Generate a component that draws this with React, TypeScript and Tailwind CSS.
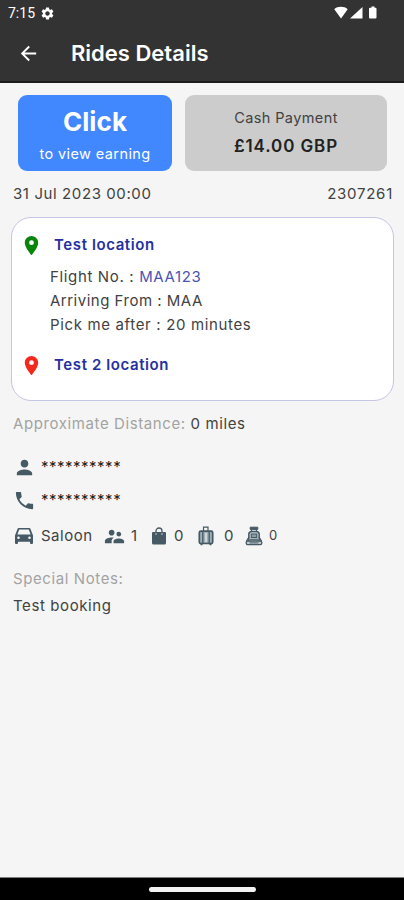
import { type ReactNode } from 'react'
import {
  MdArrowBack,
  MdLocationOn,
  MdPerson,
  MdPhone,
  MdSettings,
  MdSupervisorAccount
} from 'react-icons/md'

const ride = {
  date: '31 Jul 2023 00:00',
  reference: '2307261',
  price: '£14.00 GBP',
  pickup: 'Test location',
  dropoff: 'Test 2 location',
  flight: 'MAA123',
  arrivingFrom: 'MAA',
  pickAfter: '20 minutes',
  distance: '0 miles',
  vehicle: 'Saloon',
  notes: 'Test booking'
}

function StatusBar () {
  return (
    <div className="flex h-6 items-center justify-between pl-2 pr-[25px] pt-0.5 text-white">
      <div className="flex items-center gap-[5px]">
        <span className="font-[Roboto] text-[14px] leading-none tracking-[0px]">7:15</span>
        <MdSettings className="size-[15px]" />
      </div>
      <svg viewBox="0 0 46 14" className="h-[14px] w-[46px]" fill="currentColor">
        <path d="M1.300 3.200C4.500 0 11.200 0 14.700 3.200L8 12.500Z" />
        <path d="M29.500 1V12.500H17Z" />
        <path d="M37 1.800h1.500V.6h3v1.200H42.500q1 0 1 1V11.500q0 1-1 1H37q-1 0-1-1V2.800q0-1 1-1Z" />
      </svg>
    </div>
  )
}

function CarIcon () {
  return (
    <svg viewBox="0 0 20 18" className="h-[18px] w-5" fill="currentColor">
      <path
        fillRule="evenodd"
        d="M4.800 1h10.400q1 0 1.300 1L19 8.500V16q0 1-1 1h-1q-1 0-1-1v-1.200H4V16q0 1-1 1H2q-1 0-1-1V8.500L3.500 2q.3-1 1.300-1ZM5.200 2.600 3.400 7.600h13.200l-1.800-5ZM4.500 9.500a1.300 1.300 0 1 0 0 2.600 1.300 1.300 0 0 0 0-2.600ZM15.500 9.500a1.300 1.300 0 1 0 0 2.600 1.300 1.300 0 0 0 0-2.600Z"
      />
    </svg>
  )
}

function BagIcon () {
  return (
    <svg viewBox="0 0 16 18" className="h-[18px] w-4" fill="none">
      <path d="M2 5h12q1 0 1 1v10q0 1.500-1.500 1.500h-11Q1 17.500 1 16V6q0-1 1-1Z" fill="currentColor" />
      <path d="M5 5.500V4a3 3 0 0 1 6 0v1.500" stroke="currentColor" strokeWidth="1.300" />
      <path d="M5 6v2M11 6v2" stroke="#c3ccd1" strokeWidth="1" />
    </svg>
  )
}

function SuitcaseIcon () {
  return (
    <svg viewBox="0 0 16 20" className="h-5 w-4" fill="none" stroke="currentColor">
      <path d="M5.500 5V1.200h4.500V5" strokeWidth="1.200" />
      <rect x="1.300" y="5.200" width="13.400" height="12.300" rx="1.500" fill="#9fadb5" strokeWidth="1.700" />
      <path d="M4.800 5.500v12M11.200 5.500v12" strokeWidth="1.300" />
      <path d="M8 7v9" stroke="#dfe4e7" strokeWidth="1.500" />
      <path d="M3.500 17.500v1.800M12.500 17.500v1.800" strokeWidth="2" />
    </svg>
  )
}

function BackpackIcon () {
  return (
    <svg viewBox="0 0 18 20" className="h-5 w-[18px]" fill="none" stroke="currentColor">
      <path d="M5.200 1.200h7.600v2.200H5.200Z" fill="currentColor" strokeWidth="1" />
      <path d="M6.500 3.500v2M11.500 3.500v2" strokeWidth="1.200" />
      <path d="M3.800 15V8.500q0-3 3-3h4.400q3 0 3 3V15" fill="#c3ccd1" strokeWidth="1.500" />
      <path d="M6.300 11.500V8h5.400v3.500Z" fill="#8c9ca5" strokeWidth="1.100" />
      <path d="M4 11 1.500 15M14 11l2.500 4" strokeWidth="1.300" />
      <path d="M5 13.300h8" strokeWidth="1" />
      <rect x="1.200" y="15" width="15.600" height="3.700" rx="1.600" fill="#c3ccd1" strokeWidth="1.300" />
      <path d="M4.500 16.900h9" strokeWidth="1" />
    </svg>
  )
}

function Capacity ({ icon, value, className }: { icon: ReactNode, value: number, className: string }) {
  return (
    <div className={`flex items-center ${className}`}>
      <span className="text-[#455a64]">{icon}</span>
      <span>{value}</span>
    </div>
  )
}

export default function App () {
  return (
    <div className="flex h-[900px] w-[404px] flex-col bg-[#f5f5f5] font-[Inter,sans-serif] text-[15px] tracking-[0.6px] text-[#424242]">
      <header className="h-[83px] shrink-0 border-b-2 border-[#1c1c1c] bg-[#333333]">
        <StatusBar />
        <div className="flex h-[59px] items-center pl-[17px] text-white">
          <MdArrowBack className="size-[23px]" />
          <h1 className="ml-[31px] text-[22px] font-semibold tracking-[0px]">Rides Details</h1>
        </div>
      </header>

      <main className="flex flex-1 flex-col px-3 pt-3">
        <div className="flex h-[76px] gap-[13px] pl-1.5 pr-[5px]">
          <button className="flex w-[154px] flex-col items-center rounded-[9px] bg-[#4188ff] pt-[9px] text-white">
            <span className="text-[26px] font-bold leading-9 tracking-[0.1px]">Click</span>
            <span className="text-[14.500px] leading-7 tracking-[0.4px]">to view earning</span>
          </button>
          <div className="flex flex-1 flex-col items-center rounded-[9px] bg-[#cccccc] pt-[9px]">
            <span className="text-[14.500px] leading-7 tracking-[0.4px]">Cash Payment</span>
            <span className="text-[17px] font-semibold leading-7 tracking-[0.9px] text-[#212121]">{ride.price}</span>
          </div>
        </div>

        <div className="mt-3 flex justify-between pl-px leading-[22px]">
          <span>{ride.date}</span>
          <span className="-mr-px tracking-[0.75px]">{ride.reference}</span>
        </div>

        <section className="-ml-px mt-3 h-[184px] w-[383px] rounded-[20px] border border-[#c5c5e4] bg-white pl-2 pt-[15px]">
          <div className="flex h-6 items-center gap-[11px]">
            <MdLocationOn className="size-[23px] text-[#0a850a]" />
            <strong className="font-semibold text-[#2530a0]">{ride.pickup}</strong>
          </div>
          <div className="mt-2 pl-[30px] leading-6 tracking-[0.65px]">
            <p>Flight No. : <span className="text-[#4a55b5]">{ride.flight}</span></p>
            <p className="tracking-[0.5px]">Arriving From : {ride.arrivingFrom}</p>
            <p>Pick me after : {ride.pickAfter}</p>
          </div>
          <div className="mt-4 flex h-6 items-center gap-[11px]">
            <MdLocationOn className="size-[23px] text-[#f4281b]" />
            <strong className="font-semibold text-[#2530a0]">{ride.dropoff}</strong>
          </div>
        </section>

        <p className="mt-3 pl-px leading-[22px] text-[#a3a3a3]">
          Approximate Distance: <span className="text-[#424242]">{ride.distance}</span>
        </p>

        <div className="mt-5 flex h-6 items-center gap-1.5 pl-px">
          <MdPerson className="size-[23px] text-[#455a64]" />
          <span className="-ml-px tracking-[0.5px] text-[#212121]">**********</span>
        </div>
        <div className="mt-[9px] flex h-6 items-center gap-1.5 pl-px">
          <MdPhone className="size-[23px] text-[#455a64]" />
          <span className="-ml-px tracking-[0.5px] text-[#212121]">**********</span>
        </div>

        <div className="mt-3 flex h-6 items-center pl-0.5 tracking-[0.5px]">
          <span className="text-[#455a64]"><CarIcon /></span>
          <span className="ml-[7px] w-[62px]">{ride.vehicle}</span>
          <Capacity className="w-12 gap-[5px]" value={1} icon={<MdSupervisorAccount className="size-[23px]" />} />
          <Capacity className="w-[47px] gap-[7px]" value={0} icon={<BagIcon />} />
          <Capacity className="w-[47px] gap-[10px]" value={0} icon={<SuitcaseIcon />} />
          <Capacity className="gap-[6px] text-[13px]" value={0} icon={<BackpackIcon />} />
        </div>

        <p className="mt-5 pl-px leading-[22px] text-[#a3a3a3]">Special Notes:</p>
        <p className="mt-[5px] pl-px leading-[22px]">{ride.notes}</p>
      </main>

      <footer className="flex h-[23px] shrink-0 items-center justify-center border-t border-[#808080] bg-black">
        <div className="h-[5px] w-[107px] rounded-full bg-[#f2f2f2]" />
      </footer>
    </div>
  )
}
